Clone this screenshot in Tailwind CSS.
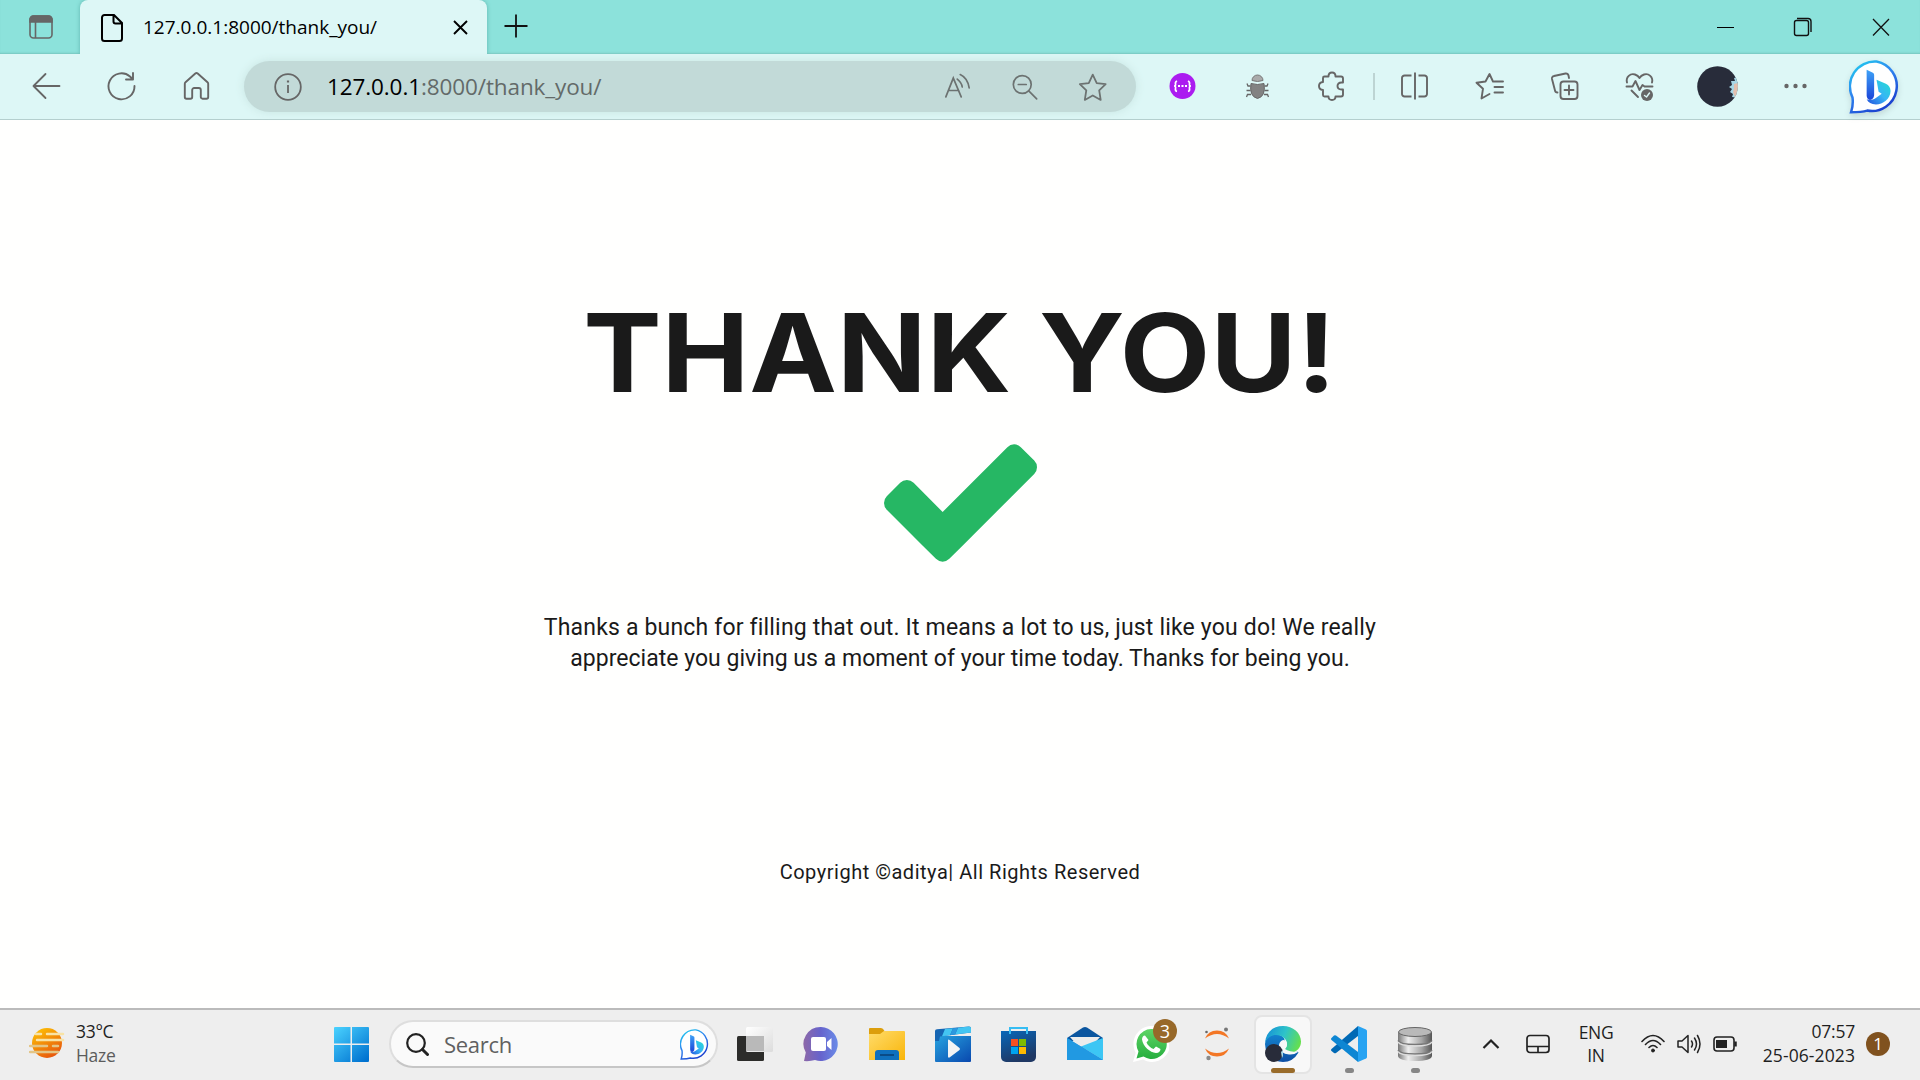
<!DOCTYPE html>
<html lang="en">
<head>
<meta charset="utf-8">
<title>127.0.0.1:8000/thank_you/</title>
<script src="https://cdn.jsdelivr.net/npm/@tailwindcss/browser@4"></script>
</head>
<body class="w-[1920px] h-[1080px] overflow-hidden flex flex-col bg-[#fffffe] font-['Open_Sans',sans-serif] text-black">

<!-- shared gradients -->
<svg class="absolute w-0 h-0" aria-hidden="true">
  <defs>
    <linearGradient id="bingRing" x1="0" y1="0" x2="0.6" y2="1"><stop offset="0" stop-color="#1fd3ee"/><stop offset=".5" stop-color="#2f86f0"/><stop offset="1" stop-color="#1b41cf"/></linearGradient>
    <linearGradient id="bingStem" x1="0" y1="0" x2="0" y2="1"><stop offset="0" stop-color="#3fa2f7"/><stop offset="1" stop-color="#1a44d8"/></linearGradient>
    <linearGradient id="bingBowl" x1="1" y1="0" x2="0" y2="1"><stop offset="0" stop-color="#22e0d0"/><stop offset=".5" stop-color="#37b5f5"/><stop offset="1" stop-color="#2350dd"/></linearGradient>
    <symbol id="bing" viewBox="0 0 52 52">
      <path d="M26.500 1.500a24 24 0 1 1-9 47.200c-4.500 1.300-10 1.500-15.500 1.500 1.500-4.500 2-9 1.400-14A24 24 0 0 1 26.500 1.500z" fill="#fff" stroke="url(#bingRing)" stroke-width="2.400"/>
      <path d="M26.500 19l9 3.800c3 1.400 4.500 4 4.500 7 0 7.500-7.500 13-14 13-4.500 0-7.500-2-9-5 3 1.200 6 .6 8.500-1l6-4.300-3-2z" fill="url(#bingBowl)"/>
      <path d="M17 9.500l5.500 2.500c1.200.6 1.700 1.300 1.700 2.500v19c0 2.700-2 5-4 5s-3.200-2-3.200-4.500z" fill="url(#bingStem)"/>
    </symbol>
  </defs>
</svg>

<!-- tab strip -->
<header class="h-[54px] flex bg-[#8ce2db] shadow-[inset_0_-2px_2px_-1px_#76c5be]">
  <div class="w-[80px] flex items-center justify-center">
    <svg class="w-6 h-6 ml-px" viewBox="0 0 24 24" fill="none" stroke="#666" stroke-width="1.600"><rect x="1" y="1" width="22" height="22" rx="3.500"/><path d="M1 7V4.500A3.500 3.500 0 0 1 4.500 1h15A3.500 3.500 0 0 1 23 4.500V7z" fill="#666"/><path d="M6.500 7v16"/></svg>
  </div>
  <div class="w-[407px] flex items-center rounded-t-lg bg-[#ddf7f6] pl-[20px] shadow-[0_0_4px_#5fb5ae]">
    <svg class="w-[24px] h-[28px] mt-[2px]" viewBox="0 0 24 28" fill="none" stroke="#000" stroke-width="2"><path d="M4.500 1H14l8 8v15.500a2.500 2.500 0 0 1-2.500 2.500h-15A2.500 2.500 0 0 1 2 24.500v-21A2.500 2.500 0 0 1 4.500 1zM13.500 1v6.500a2 2 0 0 0 2 2H22"/></svg>
    <span class="ml-[19px] w-[310px] whitespace-nowrap text-[19px]">127.0.0.1:8000/thank_you/</span>
    <svg class="w-[15px] h-[15px] shrink-0 mr-[19px] mt-px" viewBox="0 0 15 15" stroke="#000" stroke-width="1.900"><path d="M1 1l13 13M14 1L1 14"/></svg>
  </div>
  <svg class="w-6 h-6 mt-[14px] ml-[17px]" viewBox="0 0 24 24" stroke="#111" stroke-width="1.800"><path d="M12 0.500v23M0.500 12h23"/></svg>
  <div class="ml-auto flex items-center">
    <svg class="w-[78px] h-[20px]" viewBox="0 0 78 20" stroke="#000"><path d="M31 10.500h17"/></svg>
    <svg class="w-[78px] h-[20px]" viewBox="0 0 78 20" fill="none" stroke="#111" stroke-width="1.400"><rect x="30.500" y="3.500" width="14" height="15" rx="2"/><path d="M33 1.500h11a3 3 0 0 1 3 3V15"/></svg>
    <svg class="w-[78px] h-[20px]" viewBox="0 0 78 20" stroke="#111" stroke-width="1.300"><path d="M31 2l16 16.500M47 2L31 18.500"/></svg>
  </div>
</header>

<!-- toolbar -->
<nav class="h-[66px] flex items-center bg-[#ddf7f6] border-b border-[#b4cfce] pl-[9px]">
  <div class="w-[235px] flex pb-[2px] text-[#666]">
    <svg class="w-[75px] h-8" viewBox="-37.500 -16 75 32" fill="none" stroke="currentColor" stroke-width="1.800" stroke-linecap="round" stroke-linejoin="round"><path d="M13 0H-13M-1-12L-13 0-1 12"/></svg>
    <svg class="w-[75px] h-8" viewBox="-37.500 -16 75 32" fill="none" stroke="currentColor" stroke-width="1.900" stroke-linecap="round" stroke-linejoin="round"><path d="M13 0A13 13 0 1 1 8.500-9.500L11-7M11.500-13v6.500H4.500"/></svg>
    <svg class="w-[75px] h-8" viewBox="-37.500 -16 75 32" fill="none" stroke="currentColor" stroke-width="1.900" stroke-linejoin="round"><path d="M-1.200-12.500a2 2 0 0 1 2.400 0L11-3.800a2 2 0 0 1 .7 1.500V11a1.700 1.700 0 0 1-1.700 1.700H6A1.700 1.700 0 0 1 4.300 11V4A2 2 0 0 0 2.300 2h-4.600a2 2 0 0 0-2 2v7A1.700 1.700 0 0 1-6 12.700h-4A1.700 1.700 0 0 1-11.700 11V-2.300A2 2 0 0 1-11-3.800z"/></svg>
  </div>
  <div class="w-[892px] h-[51px] rounded-full bg-[#c2dad8] flex items-center shadow-[0_0_10px_#c8e4e1] text-[#6c7271]">
    <svg class="ml-[30px] w-7 h-7" viewBox="0 0 28 28" fill="none" stroke="#666" stroke-width="1.800"><circle cx="14" cy="14" r="12.800"/><path d="M14 12v8"/><path d="M14 7.500v2" stroke-width="2.200"/></svg>
    <span class="ml-[25px] whitespace-nowrap text-[22.5px] tracking-[-0.11px] text-[#636a69]"><span class="text-black">127.0.0.1</span>:8000/thank_you/</span>
    <div class="ml-auto mr-[10px] flex">
      <svg class="w-[67.5px] h-8" viewBox="-34 -16 68 32" fill="none" stroke="currentColor" stroke-width="1.700" stroke-linecap="round"><path d="M-12 10L-4.500-9 3.500 10M-9 3.500H1M-.500-8Q4-4.500 4.500 0M2.500-12.500Q10-9 11.500 1"/></svg>
      <svg class="w-[67.5px] h-8" viewBox="-34 -16 68 32" fill="none" stroke="currentColor" stroke-width="1.700" stroke-linecap="round"><circle cx="-2.500" cy="-2.500" r="9"/><path d="M4 4l8 8M-6.500-2.500h8"/></svg>
      <svg class="w-[67.5px] h-8" viewBox="-34 -16 68 32" fill="none" stroke="currentColor" stroke-width="1.800" stroke-linejoin="round"><path d="M0-12.500L4-4l9 1.200L6.500 3.500 8 13 0 8.500-8 13l1.500-9.500L-13-2.800-4-4z"/></svg>
    </div>
  </div>
  <div class="ml-[9px] flex items-center pb-px text-[#666]">
    <svg class="w-[75px] h-8" viewBox="-37.500 -16 75 32"><circle r="13" fill="#ab1cf0"/><path d="M-5.500-5q-2 1-1.500 3t-1.500 2q2 0 1.500 2.500t1.500 3M5.500-5q2 1 1.500 3T8.500 0Q6.500 0 7 2.500T5.500 5.500" fill="none" stroke="#fff" stroke-width="1.700"/><path d="M-4.500 0h9" stroke="#fff" stroke-width="2.200" stroke-dasharray="2 1.500"/></svg>
    <svg class="w-[75px] h-8" viewBox="-37.500 -16 75 32"><path d="M-5.500-5.500a5.500 5.500 0 0 1 11 0q-5.500 2-11 0z" fill="#aaa" stroke="#777"/><path d="M-6.500-2.500q6.500 2 13 0 2 13-6.500 15-8.500-2-6.500-15z" fill="#828282" stroke="#666"/><path d="M-7 0h-2.500l-1-2.500M-7 4.500h-4M-6.500 8.500H-10L-11 11M7 0h2.500l1-2.500M7 4.500h4M6.500 8.500H10L11 11" fill="none" stroke="#666" stroke-width="1.300"/></svg>
    <svg class="w-[75px] h-8" viewBox="-37.500 -16 75 32" fill="none" stroke="currentColor" stroke-width="1.900" stroke-linejoin="round"><path d="M-8-9.500h4q0-4 3.500-4t3.500 4h5.500a2 2 0 0 1 2 2v4H9q-4 0-4 3.500t4 3.500h1.500v5a2 2 0 0 1-2 2H3q0 3.500-3.500 3.500T-4 10.500h-4a1.500 1.500 0 0 1-1.500-1.500V4q-4-.5-4-4t4-4v-4a1.500 1.500 0 0 1 1.500-1.500z"/></svg>
    <div class="w-[7px] flex justify-center"><div class="w-[2px] h-[27px] bg-[#bdd4d3]"></div></div>
    <svg class="w-[75px] h-8" viewBox="-37.500 -16 75 32" fill="none" stroke="currentColor" stroke-width="1.900"><path d="M-3-10.500h-7A2.500 2.500 0 0 0-12.500-8V8A2.500 2.500 0 0 0-10 10.500h7M4-10.500h6A2.500 2.500 0 0 1 12.500-8V8A2.500 2.500 0 0 1 10 10.500H4M.5-13.500v27"/></svg>
    <svg class="w-[75px] h-8" viewBox="-37.500 -16 75 32" fill="none" stroke="currentColor" stroke-width="1.900" stroke-linecap="round" stroke-linejoin="round"><path d="M4-4.500H3.500L0-12-4-4.500l-9 1.200 6.500 6L-8 12.500 0 8M5-4.500h8.500M5 1h8.500M5 6.500h8.500"/></svg>
    <svg class="w-[75px] h-8" viewBox="-37.500 -16 75 32" fill="none" stroke="currentColor" stroke-width="1.900" stroke-linecap="round" stroke-linejoin="round"><rect x="-4" y="-4.500" width="17" height="17.500" rx="3"/><path d="M4.500-.500v9M0 4h9M4.500-8L4-10.500a2.500 2.500 0 0 0-3-2L-10.500-10a2.500 2.500 0 0 0-2 3L-9.500 4.500A2.500 2.500 0 0 0-7 6.500"/></svg>
    <svg class="w-[75px] h-8" viewBox="-37.500 -16 75 32" fill="none" stroke="currentColor" stroke-width="1.900" stroke-linecap="round" stroke-linejoin="round"><path d="M-12.500-3.500C-14-9-9-13-4.500-11.500Q-1.500-10.500 0-8q1.500-2.500 4.500-3.500C9-13 14-9 12.500-3.500M-13 .5h6l3-5.500L0 4l3-5 2 1.500h8M-8 4.500l6.500 6.500"/><circle cx="7.500" cy="9" r="6" fill="#666" stroke="none"/><path d="M5 9.500l2 1.500 3-4" stroke="#ddf7f6" stroke-width="1.400"/></svg>
    <div class="w-[81px] flex justify-center">
      <svg class="w-[41px] h-[41px]" viewBox="0 0 41 41"><defs><clipPath id="av"><circle cx="20.500" cy="20.500" r="20.300"/></clipPath></defs><g clip-path="url(#av)"><rect width="41" height="41" fill="#282c3a"/><path d="M41 11l-4 1 1 3-4 0 1 4-3 2 3 2-2 3 3 2-1 3 6 1z" fill="#a7d6e6"/><path d="M41 17l-4 1v5l-1 3 2 5 3 1z" fill="#e3bfae"/></g></svg>
    </div>
    <svg class="w-[75px] h-8" viewBox="-37.500 -16 75 32" fill="currentColor"><circle cx="-9" r="2.200"/><circle r="2.200"/><circle cx="9" r="2.200"/></svg>
    <svg class="ml-[16px] mt-[2px] w-[54px] h-[54px] drop-shadow-md"><use href="#bing"/></svg>
  </div>
</nav>

<!-- page -->
<main class="h-[888px] flex flex-col items-center pt-[173px] text-[#1a1a1a]">
  <h1 class="h-[120px] whitespace-nowrap font-['Inter',sans-serif] font-bold text-[108.5px] leading-[120px] scale-x-[1.083]">THANK YOU!</h1>
  <svg class="mt-[31px] w-[153px] h-[118px]" viewBox="121 334 1550 1188" fill="#26b764"><path d="M1671 566q0 40-28 68l-724 724-136 136q-28 28-68 28t-68-28l-136-136-362-362q-28-28-28-68t28-68l136-136q28-28 68-28t68 28l294 295 656-657q28-28 68-28t68 28l136 136q28 28 28 68z"/></svg>
  <p class="mt-[50px] text-center whitespace-nowrap font-['Roboto',sans-serif] text-[23px] leading-[31px]"><span class="block tracking-[0.18px]">Thanks a bunch for filling that out. It means a lot to us, just like you do! We really</span><span class="block tracking-[0.03px]">appreciate you giving us a moment of your time today. Thanks for being you.</span></p>
  <p class="mt-[184px] whitespace-nowrap font-['Roboto',sans-serif] text-[20px] leading-[28px] tracking-[0.52px]">Copyright ©aditya| All Rights Reserved</p>
</main>

<!-- taskbar -->
<footer class="h-[72px] flex items-center bg-[#eee] border-t-2 border-[#bbb] pb-[2px] text-[17.5px] leading-[24px] text-[#1f1f1f]">
  <svg class="ml-[29px] w-9 h-9 mt-[-2px]" viewBox="0 0 36 36"><defs><linearGradient id="sun" x1="0" y1="0" x2=".6" y2="1"><stop offset="0" stop-color="#ffca05"/><stop offset="1" stop-color="#e8590c"/></linearGradient></defs><circle cx="18" cy="18" r="15" fill="url(#sun)"/><g stroke="#f8e3a6" stroke-width="2.500" stroke-linecap="round"><path d="M7 9h5M18 9h16M8 15h26"/><path d="M1 21h17M24 21h5M1 27h28" stroke="#e3c586"/></g></svg>
  <div class="ml-[11px] w-[258px] mt-[-2px] tracking-[-0.3px]"><div>33°C</div><div class="text-[#5c5c5c]">Haze</div></div>
  <svg class="w-[35px] h-[35px]" viewBox="0 0 35 35"><defs><linearGradient id="win" gradientUnits="userSpaceOnUse" x1="0" y1="0" x2="30" y2="35"><stop offset="0" stop-color="#4bd3ff"/><stop offset="1" stop-color="#0072d0"/></linearGradient></defs><path d="M1 0h15.500v16.500H0V1a1 1 0 0 1 1-1zM18 0h16a1 1 0 0 1 1 1v15.500H18zM0 18h16.500v17H1a1 1 0 0 1-1-1zM18 18h17v16a1 1 0 0 1-1 1H18z" fill="url(#win)"/></svg>
  <div class="ml-[20px] w-[329px] h-[48px] rounded-full bg-[#fafafa] border-2 border-[#dedede] border-b-[#c6c6c6] flex items-center">
    <svg class="ml-[15px] w-[23px] h-[23px]" viewBox="0 0 23 23" fill="none" stroke="#222" stroke-width="2.200" stroke-linecap="round"><circle cx="10" cy="10" r="8.800"/><path d="M16.500 16.500l5 5" stroke-width="3"/></svg>
    <span class="ml-[15px] text-[22px] tracking-[-0.3px] text-[#606060]">Search</span>
    <svg class="ml-auto mr-[5px] w-[31px] h-[31px]"><use href="#bing"/></svg>
  </div>
  <div class="ml-[4px] grid grid-cols-11 w-[726px] justify-items-center items-center">
    <svg class="w-9 h-9" viewBox="0 0 36 36"><defs><linearGradient id="tv" x1="0" y1="0" x2="1" y2="1"><stop offset="0" stop-color="#fff"/><stop offset="1" stop-color="#dcdcdc"/></linearGradient></defs><rect y="10" width="27" height="25" rx="1.500" fill="#2c2c2a"/><rect x="9" y="1" width="27" height="25" rx="1.500" fill="url(#tv)"/><path d="M9 10h18v15H9z" fill="#b9b9b9"/></svg>
    <svg class="w-9 h-9" viewBox="0 0 36 36"><defs><linearGradient id="chat" x1="0" y1="0" x2="1" y2="0"><stop offset="0" stop-color="#8d68a8"/><stop offset=".5" stop-color="#6663cc"/><stop offset="1" stop-color="#6a8be8"/></linearGradient></defs><path d="M18 1a17 17 0 1 1-6 33q-5 1.500-11 1l1.800-8.500A17 17 0 0 1 18 1z" fill="url(#chat)"/><rect x="8" y="11" width="15" height="14" rx="2" fill="#fff"/><path d="M24 16l4.500-4v12L24 20z" fill="#fff"/></svg>
    <svg class="w-9 h-9" viewBox="0 0 36 36"><defs><linearGradient id="fo" x1="0" y1="0" x2="1" y2="1"><stop offset="0" stop-color="#ffdc6b"/><stop offset="1" stop-color="#f9b509"/></linearGradient></defs><path d="M0 3a1 1 0 0 1 1-1h11q2 0 3.500 3H20v5H0z" fill="#dc9e0c"/><path d="M0 8h11l4-3h20a1 1 0 0 1 1 1v28H0z" fill="url(#fo)"/><path d="M6 34v-7a3 3 0 0 1 3-3h18a3 3 0 0 1 3 3v7z" fill="#0f70bd"/><path d="M11 29h14" stroke="#0a4b86" stroke-width="2"/></svg>
    <svg class="w-9 h-9" viewBox="0 0 36 36"><defs><linearGradient id="mv" x1="0" y1="0" x2="1" y2="1"><stop offset="0" stop-color="#27a3e0"/><stop offset="1" stop-color="#0948ae"/></linearGradient></defs><path d="M0 10h36v25a1 1 0 0 1-1 1H1a1 1 0 0 1-1-1z" fill="url(#mv)"/><path d="M0 5q0-1.500 2-1.700L34 .5q2 0 2 2v4L5 10.500 4 15H0z" fill="#1565b3"/><path d="M10 3l8-.8-3 7-8 1zM23 1.700l11-1.200q2 0 2 2v4L20 8.500z" fill="#43c5f2"/><path d="M18 2.200l5-.5-3 6.800-5 .7z" fill="#2c98df"/><path d="M13 14.500q0-1.500 1.500-.5l10 8q1 1 0 2l-10 7.500q-1.500.5-1.500-1z" fill="#f4f4f4"/></svg>
    <svg class="w-9 h-9" viewBox="0 0 36 36"><defs><linearGradient id="st" x1="0" y1="0" x2=".4" y2="1"><stop offset="0" stop-color="#0867b9"/><stop offset="1" stop-color="#1f3864"/></linearGradient></defs><path d="M0 5h35v26a5 5 0 0 1-5 5H5a5 5 0 0 1-5-5z" fill="url(#st)"/><path d="M9 8V2h17v6" fill="none" stroke="#36bdf3" stroke-width="2"/><path d="M10 13h7v7h-7z" fill="#f65022"/><path d="M18 13h7v7h-7z" fill="#7fba00"/><path d="M10 21h7v7h-7z" fill="#00a4ef"/><path d="M18 21h7v7h-7z" fill="#ffb900"/></svg>
    <svg class="w-9 h-9" viewBox="0 0 36 36"><path d="M0 12L16 1.500q2-1.200 4 0L36 12v3H0z" fill="#0a559f"/><path d="M3 11h30L18 28z" fill="#ececec"/><path d="M0 12l18 11v11H1a1 1 0 0 1-1-1z" fill="#2a9fe3"/><path d="M36 12v22L14 20.500z" fill="#3cc6f4"/><path d="M0 34V31L14 20.500 36 34z" fill="#1d8ddd"/><path d="M0 12L18 23 36 34H0z" fill="#2199e2"/></svg>
    <div class="relative">
      <svg class="w-9 h-9" viewBox="0 0 36 36"><defs><linearGradient id="wa" x1="0" y1="0" x2="0" y2="1"><stop offset="0" stop-color="#5fd566"/><stop offset="1" stop-color="#27ae3f"/></linearGradient></defs><path d="M18 0a18 18 0 1 1-8 33.500L0 36l2.700-9.300A18 18 0 0 1 18 0z" fill="#fff"/><path d="M18 3a15 15 0 1 1-7.500 27.500L3.500 32.500l2-7A15 15 0 0 1 18 3z" fill="url(#wa)"/><path d="M12 9.500c-2 0-3 2-3 4 1 7 8 13 14 13.500 3 0 4.500-2 4.500-4l-4.500-2.500-2.500 2.500c-3-1-6-4-7-6.500l2-2.500z" fill="#fff"/></svg>
      <div class="absolute left-[20px] top-[-7px] w-6 h-6 rounded-full bg-[#976829] text-white text-[18px] leading-[24px] text-center">3</div>
    </div>
    <svg class="w-9 h-9" viewBox="0 0 36 36"><path d="M6 12.500a13 13 0 0 1 24 0Q18 3.500 6 12.500zM6 22.500q12 9 24 0a13 13 0 0 1-24 0z" fill="#f37726"/><circle cx="27" cy="3.500" r="2" fill="#777"/><circle cx="7.500" cy="6" r="1.300" fill="#666"/><circle cx="9.500" cy="32" r="2.200" fill="#8a8a8a"/></svg>
    <div class="relative w-[58px] h-[59px] rounded-lg bg-[#f8f8f8] border-2 border-[#e4e4e4] flex items-center justify-center">
      <svg class="w-9 h-9 shrink-0" viewBox="0 0 36 36"><defs><linearGradient id="ed1" x1="0" y1=".3" x2="1" y2=".6"><stop offset="0" stop-color="#1793d6"/><stop offset=".5" stop-color="#2ec3c9"/><stop offset="1" stop-color="#66e04b"/></linearGradient><linearGradient id="ed2" x1="0" y1="0" x2="0" y2="1"><stop offset="0" stop-color="#1483cf"/><stop offset="1" stop-color="#0d4ea3"/></linearGradient></defs><path d="M0 18Q1 8.500 11 8.500q8 0 9 6.500c-4 1-6 5-3 8.500 3.500 4 9.500 4 14 2.500q2-.7 2.500.5Q28 36 18 36 1 35 0 18z" fill="url(#ed2)"/><path d="M0 17C1 6 8 0 18 0s18 7 18 15.500c0 6-4 11-10.500 11-4 0-6.500-1.500-6-3 .3-1 2.500-2 2.500-5.500 0-5-5-9-11-9C5.500 9 1.500 12.500 0 17z" fill="url(#ed1)"/><path d="M18 14q4 0 4 4 0 3-2 5 4 3 13 3-4 3-9 2.500-9-1-10-8-.3-5 4-6.500z" fill="#f8f8f8"/><circle cx="9" cy="27" r="9" fill="#282c3a"/><path d="M18 24l-2 2 1 6 1-2z" fill="#a7d6e6"/></svg>
      <div class="absolute left-[15px] bottom-[-1px] w-6 h-[5px] rounded-full bg-[#996b2a]"></div>
    </div>
    <div class="relative">
      <svg class="w-9 h-9" viewBox="0 0 36 36"><path d="M27 0v10L5 27q-1 .7-2 0l-2.500-2q-1-1 0-2z" fill="#0069b5"/><path d="M27 36V26L5 9.500q-1-.7-2 0L.5 12q-1 1 0 2z" fill="#0d86d3"/><path d="M27 0l8 3.500q1 .5 1 1.500v26q0 1-1 1.500L27 36z" fill="#27a3f2"/></svg>
      <div class="absolute left-[14px] top-[42px] w-[9px] h-[5px] rounded-full bg-[#868686]"></div>
    </div>
    <div class="relative">
      <svg class="w-9 h-9" viewBox="0 0 36 36"><defs><linearGradient id="db" x1="0" y1="0" x2="1" y2="0"><stop offset="0" stop-color="#777"/><stop offset=".3" stop-color="#eee"/><stop offset=".7" stop-color="#a5a5a5"/><stop offset="1" stop-color="#555"/></linearGradient></defs><path d="M1 6v24q1 5 17 5t17-5V6z" fill="url(#db)"/><ellipse cx="18" cy="6" rx="16.500" ry="4.500" fill="#b9b9b9" stroke="#666"/><g fill="none" stroke-width="1.500"><path d="M1 14.500q2 4 17 4t17-4M1 24q2 4 17 4t17-4" stroke="#777"/><path d="M1 16q2 4 17 4t17-4M1 25.500q2 4 17 4t17-4" stroke="#ddd"/></g></svg>
      <div class="absolute left-[14px] top-[42px] w-[9px] h-[5px] rounded-full bg-[#868686]"></div>
    </div>
  </div>
  <svg class="ml-[34px] w-[18px] h-3" viewBox="0 0 18 12" fill="none" stroke="#222" stroke-width="2.200"><path d="M1.500 10L9 2.500l7.500 7.500"/></svg>
  <svg class="ml-[26px] w-[24px] h-[20px]" viewBox="0 0 24 20" fill="none" stroke="#222" stroke-width="1.700"><rect x="1" y="1.500" width="22" height="17" rx="3"/><path d="M1 12.500h22M12 12.500v6"/></svg>
  <div class="ml-[27px] w-[38px] text-center leading-[23px] tracking-[-0.3px]"><div>ENG</div><div>IN</div></div>
  <svg class="ml-[26px] mt-[-2px] w-6 h-[19px]" viewBox="0 0 24 19" fill="none" stroke="#222" stroke-width="1.600" stroke-linecap="round"><path d="M1 7.500Q12-4.500 23 7.500M4.500 10.500q7.500-8 15 0M8 13.500q4-4 8 0"/><circle cx="12" cy="16.500" r="1.500" fill="#222" stroke-width="1"/></svg>
  <svg class="ml-[12px] w-6 h-5" viewBox="0 0 24 20" fill="none" stroke="#222" stroke-width="1.500" stroke-linecap="round" stroke-linejoin="round"><path d="M1 7h4l6-5.500v17L5 13H1zM14.500 7q2 3 0 6M17.500 4q4 6 0 12M20.500 1.500q5 8.500 0 17"/></svg>
  <svg class="ml-[12px] w-6 h-4" viewBox="0 0 24 16" fill="none" stroke="#222" stroke-width="1.600"><rect x="1" y="1" width="20" height="14" rx="3"/><path d="M3 4h11v8H3z" fill="#222" stroke="none"/><path d="M22.500 5.500v5" stroke-width="2.500"/></svg>
  <div class="ml-[21px] w-[97px] mt-[-2px] text-right whitespace-nowrap"><div class="tracking-[-0.2px]">07:57</div><div class="tracking-[0.1px]">25-06-2023</div></div>
  <div class="ml-[11px] w-6 h-6 rounded-full bg-[#80521f] text-white text-[17px] leading-[23px] text-center">1</div>
</footer>
</body>
</html>
